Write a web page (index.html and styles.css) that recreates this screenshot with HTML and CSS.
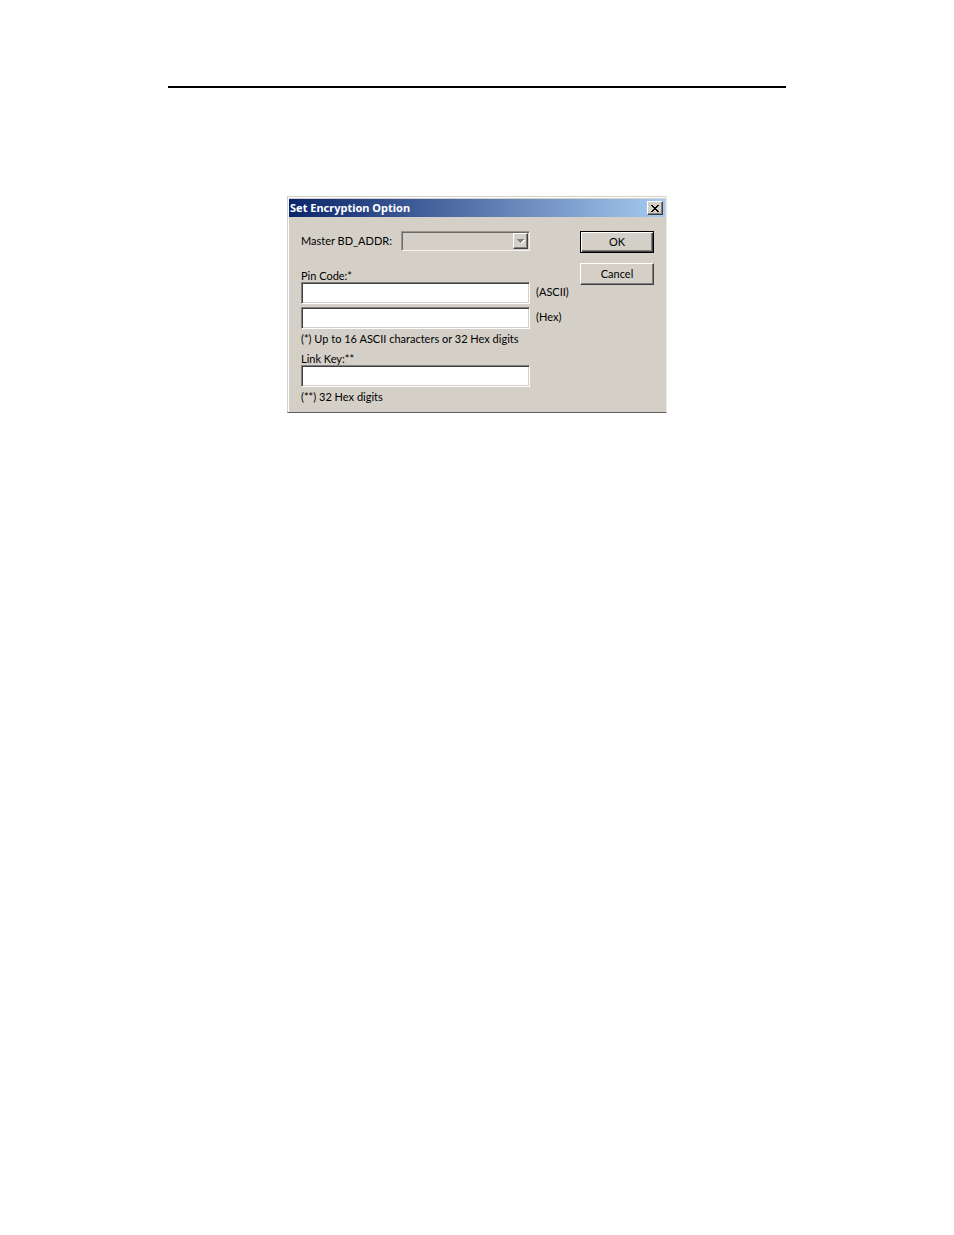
FILE: index.html
```
<!DOCTYPE html>
<html lang="en">

<head>
  <meta charset="UTF-8">
  <title>Set Encryption Option</title>
  <link rel="stylesheet" href="styles.css">
</head>

<body>
  <main class="page">
    <hr class="page-rule">

    <section class="dialog" role="dialog" aria-labelledby="dialogTitle">
      <header class="title-bar">
        <h1 id="dialogTitle">Set Encryption Option</h1>
        <button type="button" class="close-btn" aria-label="Close">
          <svg width="8" height="7" viewBox="0 0 8 7" shape-rendering="crispEdges">
            <path d="M0 0h2v1H0zM6 0h2v1H6zM1 1h2v1H1zM5 1h2v1H5zM2 2h4v1H2zM3 3h2v1H3zM2 4h4v1H2zM1 5h2v1H1zM5 5h2v1H5zM0 6h2v1H0zM6 6h2v1H6z" />
          </svg>
        </button>
      </header>

      <form class="dialog-body">
        <div class="fields">
          <div class="address-row">
            <label for="master">Master BD_ADDR:</label>
            <div class="combo">
              <select id="master" name="master" disabled></select>
              <span class="combo-arrow">
                <svg width="8" height="5" viewBox="0 0 8 5" shape-rendering="crispEdges">
                  <path fill="#fff" d="M1 1h7v1H1zM2 2h5v1H2zM3 3h3v1H3zM4 4h1v1H4z" />
                  <path fill="#808080" d="M0 0h7v1H0zM1 1h5v1H1zM2 2h3v1H2zM3 3h1v1H3z" />
                </svg>
              </span>
            </div>
          </div>

          <p class="caption">Pin Code:*</p>
          <div class="field-row">
            <input type="text" id="pinAscii" name="pinAscii" maxlength="16">
            <label for="pinAscii">(ASCII)</label>
          </div>
          <div class="field-row">
            <input type="text" id="pinHex" name="pinHex" maxlength="32">
            <label for="pinHex">(Hex)</label>
          </div>
          <p class="note">(*) Up to 16 ASCII characters or 32 Hex digits</p>

          <label class="caption" for="linkKey">Link Key:**</label>
          <div class="field-row">
            <input type="text" id="linkKey" name="linkKey" maxlength="32">
          </div>
          <p class="note">(**) 32 Hex digits</p>
        </div>

        <div class="actions">
          <button type="submit" class="btn btn-default">OK</button>
          <button type="button" class="btn">Cancel</button>
        </div>
      </form>
    </section>
  </main>
</body>

</html>
```

FILE: styles.css
```
* {
  box-sizing: border-box;
}

body {
  margin: 0;
  background: #fff;
  color: #000;
  font-family: Lato, "Liberation Sans", sans-serif;
  font-size: 11px;
  line-height: 12px;
}

.page {
  max-width: 618px;
  margin: 0 auto;
  padding: 86px 0;
}

.page-rule {
  height: 2px;
  margin: 0 0 108px;
  border: none;
  background: #000;
}

.dialog {
  max-width: 380px;
  margin: 0 auto;
  background: #d4d0c8;
  border: 1px solid #d4d0c8;
  border-right-color: #ece9e4;
  border-bottom: 1px solid #606060;
  box-shadow: inset 1px 1px #fff;
  padding: 2px 1px 1px;
}

.title-bar {
  display: flex;
  align-items: center;
  justify-content: space-between;
  height: 18px;
  padding: 0 2px 0 1px;
  background: linear-gradient(to right, #0a246a, #a6caf0);
}

.title-bar h1 {
  margin: 0;
  color: #fff;
  font-family: "Noto Sans", "Open Sans", sans-serif;
  font-size: 11px;
  font-weight: bold;
}

button {
  padding: 0;
  background: #d4d0c8;
  color: #000;
  font: inherit;
  border: 1px solid;
  border-color: #fff #404040 #404040 #fff;
  box-shadow: inset -1px -1px #808080;
}

.close-btn {
  display: flex;
  align-items: center;
  justify-content: center;
  width: 16px;
  height: 14px;
}

.dialog-body {
  display: flex;
  justify-content: space-between;
  padding: 14px 11px 8px 12px;
}

.address-row {
  display: flex;
  align-items: center;
  justify-content: space-between;
  width: 229px;
  height: 20px;
  margin-bottom: 19px;
}

.combo {
  position: relative;
  width: 129px;
}

select,
input {
  display: block;
  border: 1px solid;
  border-color: #808080 #fff #fff #808080;
  border-radius: 0;
  box-shadow: inset 1px 1px #404040, inset -1px -1px #d4d0c8;
  font: inherit;
}

select {
  appearance: none;
  width: 100%;
  height: 20px;
  background: #d4d0c8;
}

.combo-arrow {
  position: absolute;
  top: 2px;
  right: 2px;
  display: flex;
  align-items: center;
  justify-content: center;
  width: 15px;
  height: 16px;
  background: #d4d0c8;
  border: 1px solid;
  border-color: #fff #404040 #404040 #fff;
  box-shadow: inset -1px -1px #808080;
  pointer-events: none;
}

.caption {
  display: block;
  margin: 0;
}

.field-row {
  display: flex;
  align-items: center;
  gap: 6px;
}

.field-row + .field-row {
  margin-top: 3px;
}

.field-row label {
  padding-bottom: 2px;
}

input {
  width: 229px;
  height: 22px;
  padding: 2px 4px;
  background: #fff;
}

.note {
  margin: 4px 0 8px;
}

.note:last-child {
  margin-bottom: 0;
}

.actions {
  display: flex;
  flex-direction: column;
  gap: 10px;
}

.btn {
  width: 74px;
  height: 22px;
}

.btn-default {
  border-color: #000;
  box-shadow: inset 1px 1px #fff, inset -1px -1px #404040, inset -2px -2px #808080;
}
```
